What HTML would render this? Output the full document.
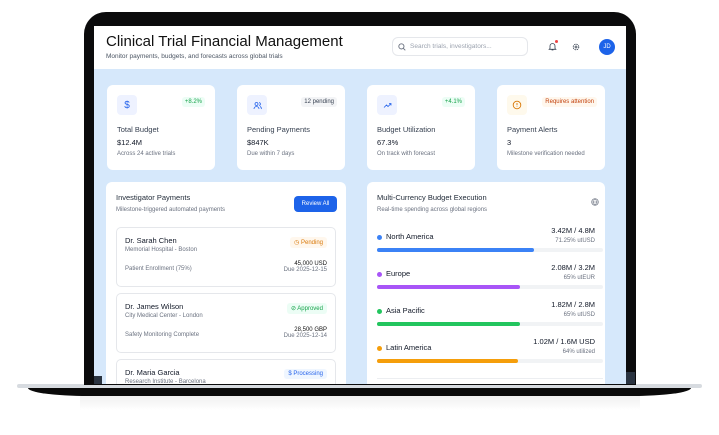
<!DOCTYPE html><html><head><style>
*{box-sizing:border-box;margin:0;padding:0}
body{width:719px;height:435px;background:#fff;position:relative;overflow:hidden;font-family:"Liberation Sans",sans-serif;color:#111827}
.bezel{position:absolute;left:84px;top:12px;width:552px;height:373px;background:#0b0b0c;border-radius:22px 22px 0 0}
.screen{position:absolute;left:94px;top:26px;width:532px;height:358px;background:#d6e8fb;overflow:hidden}
.hdr{position:absolute;left:0;top:0;width:532px;height:43px;background:#fff}
.abs{position:absolute}
.card{position:absolute;background:#fff;border-radius:6px}
.t1{font-size:7.5px;color:#374151}
.t2{font-size:7.5px;color:#111827}
.t3{font-size:6px;color:#6b7280}
.ic{position:absolute;left:10px;top:10px;width:20px;height:20px;border-radius:4px;background:#eef2ff;display:flex;align-items:center;justify-content:center}
.badge{position:absolute;top:12px;font-size:6px;padding:2px 3px;border-radius:3px}
.item{position:absolute;left:10px;width:220px;height:60px;border:1px solid #e5e7eb;border-radius:5px;background:#fff}
.bar{position:absolute;left:10px;width:226px;height:4px;background:#f1f3f5;border-radius:2px}
.bar i{display:block;height:4px;border-radius:2px}
.dot{display:inline-block;width:5px;height:5px;border-radius:50%;margin-right:4px;vertical-align:middle}
</style></head><body>
<div class="abs" style="left:17px;top:384px;width:685px;height:4px;background:#d7dbe0;border-radius:2px"></div>
<div class="abs" style="left:28px;top:388px;width:663px;height:8px;background:#0a0a0a;border-radius:0 0 60px 60px/0 0 8px 8px"></div>
<div class="abs" style="left:80px;top:396px;width:560px;height:14px;background:linear-gradient(#f0f0f0,#fff)"></div>
<div class="bezel"></div>
<div class="screen">
 <div class="hdr">
  <div class="abs" style="left:12px;top:7px;font-size:15px;color:#111">Clinical Trial Financial Management</div>
  <div class="abs" style="left:12px;top:27px;font-size:6.5px;color:#4b5563">Monitor payments, budgets, and forecasts across global trials</div>
  <div class="abs" style="left:298px;top:11px;width:136px;height:19px;border:1px solid #e5e7eb;border-radius:6px;font-size:6.5px;color:#9ca3af;padding:5px 0 0 17px">Search trials, investigators...
   <svg class="abs" style="left:5px;top:5px" width="8" height="8" viewBox="0 0 8 8"><circle cx="3.4" cy="3.4" r="2.6" fill="none" stroke="#6b7280" stroke-width=".9"/><path d="M5.3 5.3L7.3 7.3" stroke="#6b7280" stroke-width=".9"/></svg></div>
  <svg class="abs" style="left:454px;top:16px" width="9" height="9" viewBox="0 0 9 9"><path d="M2 6.5V4a2.5 2.5 0 015 0v2.5l.8.8H1.2zM3.6 8h1.8" fill="none" stroke="#374151" stroke-width=".8"/></svg>
  <div class="abs" style="left:461px;top:14px;width:3px;height:3px;border-radius:50%;background:#ef4444"></div>
  <svg class="abs" style="left:478px;top:17px" width="8" height="8" viewBox="0 0 8 8"><circle cx="4" cy="4" r="2.8" fill="none" stroke="#374151" stroke-width=".9" stroke-dasharray="1.4 .8"/><circle cx="4" cy="4" r="1" fill="none" stroke="#374151" stroke-width=".7"/></svg>
  <div class="abs" style="left:505px;top:13px;width:16px;height:16px;border-radius:50%;background:#1d63e9;color:#fff;font-size:6px;text-align:center;line-height:16px">JD</div>
 </div>
 <div class="card" style="left:13px;top:59px;width:108px;height:85px">
  <div class="ic"><span style="color:#2563eb;font-size:10px">$</span></div>
  <div class="badge" style="right:10px;background:#ecfdf5;color:#16a34a">+8.2%</div>
  <div class="abs t1" style="left:10px;top:40px">Total Budget</div>
  <div class="abs t2" style="left:10px;top:53px">$12.4M</div>
  <div class="abs t3" style="left:10px;top:66px">Across 24 active trials</div></div>
 <div class="card" style="left:143px;top:59px;width:108px;height:85px">
  <div class="ic"><svg width="9" height="9" viewBox="0 0 9 9"><circle cx="3.5" cy="3" r="1.5" fill="none" stroke="#2563eb" stroke-width=".8"/><path d="M1 8a2.5 2.5 0 015 0M6 1.6a1.4 1.4 0 010 2.8M7 5.5A2.3 2.3 0 018.3 8" fill="none" stroke="#2563eb" stroke-width=".8"/></svg></div>
  <div class="badge" style="right:8px;background:#f3f4f6;color:#374151">12 pending</div>
  <div class="abs t1" style="left:10px;top:40px">Pending Payments</div>
  <div class="abs t2" style="left:10px;top:53px">$847K</div>
  <div class="abs t3" style="left:10px;top:66px">Due within 7 days</div></div>
 <div class="card" style="left:273px;top:59px;width:108px;height:85px">
  <div class="ic"><svg width="9" height="9" viewBox="0 0 9 9"><path d="M1 6.5l2.5-2.5 1.5 1.5L8 2.5M6 2.5h2v2" fill="none" stroke="#2563eb" stroke-width=".8"/></svg></div>
  <div class="badge" style="right:10px;background:#ecfdf5;color:#16a34a">+4.1%</div>
  <div class="abs t1" style="left:10px;top:40px">Budget Utilization</div>
  <div class="abs t2" style="left:10px;top:53px">67.3%</div>
  <div class="abs t3" style="left:10px;top:66px">On track with forecast</div></div>
 <div class="card" style="left:403px;top:59px;width:108px;height:85px">
  <div class="ic" style="background:#fef9ec"><svg width="10" height="10" viewBox="0 0 10 10"><circle cx="5" cy="5" r="3.8" fill="none" stroke="#d97706" stroke-width=".9"/><path d="M5 3v2.3M5 6.5v.5" stroke="#d97706" stroke-width=".9"/></svg></div>
  <div class="badge" style="right:8px;background:#fff7ed;color:#c2410c">Requires attention</div>
  <div class="abs t1" style="left:10px;top:40px">Payment Alerts</div>
  <div class="abs t2" style="left:10px;top:53px">3</div>
  <div class="abs t3" style="left:10px;top:66px">Milestone verification needed</div></div>
 <div class="card" style="left:12px;top:156px;width:240px;height:220px">
  <div class="abs" style="left:10px;top:11px;font-size:7.5px;color:#1f2937">Investigator Payments</div>
  <div class="abs t3" style="left:10px;top:25px">Milestone-triggered automated payments</div>
  <div class="abs" style="left:188px;top:14px;width:43px;height:16px;background:#1d63e9;border-radius:4px;color:#fff;font-size:6px;text-align:center;line-height:16px">Review All</div>
  <div class="item" style="top:45px">
   <div class="abs t2" style="left:8px;top:8px">Dr. Sarah Chen</div>
   <div class="abs t3" style="left:8px;top:19px">Memorial Hospital - Boston</div>
   <div class="abs" style="right:8px;top:9px;font-size:6px;color:#d97706;background:#fff7ed;padding:2px 4px;border-radius:3px">◷ Pending</div>
   <div class="abs t3" style="left:8px;top:38px">Patient Enrollment (75%)</div>
   <div class="abs" style="right:8px;top:33px;font-size:6px;color:#111;text-align:right">45,000 USD<br><span style="color:#6b7280">Due 2025-12-15</span></div></div>
  <div class="item" style="top:111px">
   <div class="abs t2" style="left:8px;top:8px">Dr. James Wilson</div>
   <div class="abs t3" style="left:8px;top:19px">City Medical Center - London</div>
   <div class="abs" style="right:8px;top:9px;font-size:6px;color:#16a34a;background:#ecfdf5;padding:2px 4px;border-radius:3px">⊘ Approved</div>
   <div class="abs t3" style="left:8px;top:38px">Safety Monitoring Complete</div>
   <div class="abs" style="right:8px;top:33px;font-size:6px;color:#111;text-align:right">28,500 GBP<br><span style="color:#6b7280">Due 2025-12-14</span></div></div>
  <div class="item" style="top:177px">
   <div class="abs t2" style="left:8px;top:8px">Dr. Maria Garcia</div>
   <div class="abs t3" style="left:8px;top:19px">Research Institute - Barcelona</div>
   <div class="abs" style="right:8px;top:9px;font-size:6px;color:#2563eb;background:#eff6ff;padding:2px 4px;border-radius:3px">$ Processing</div></div>
 </div>
 <div class="card" style="left:273px;top:156px;width:238px;height:220px">
  <div class="abs" style="left:10px;top:11px;font-size:7.5px;color:#1f2937">Multi-Currency Budget Execution</div>
  <div class="abs t3" style="left:10px;top:25px">Real-time spending across global regions</div>
  <svg class="abs" style="left:224px;top:16px" width="8" height="8" viewBox="0 0 8 8"><circle cx="4" cy="4" r="3.3" fill="none" stroke="#6b7280" stroke-width=".7"/><path d="M.7 4h6.6M4 .7c-2 2-2 4.6 0 6.6M4 .7c2 2 2 4.6 0 6.6" fill="none" stroke="#6b7280" stroke-width=".6"/></svg>
  <div class="abs t2" style="left:10px;top:50px"><span class="dot" style="background:#3b82f6"></span>North America</div>
  <div class="abs" style="right:10px;top:44px;font-size:7.5px;text-align:right">3.42M / 4.8M<br><span style="font-size:6px;color:#6b7280">71.25% utUSD</span></div>
  <div class="bar" style="top:66px"><i style="width:157px;background:#3b82f6"></i></div>
  <div class="abs t2" style="left:10px;top:87px"><span class="dot" style="background:#a855f7"></span>Europe</div>
  <div class="abs" style="right:10px;top:81px;font-size:7.5px;text-align:right">2.08M / 3.2M<br><span style="font-size:6px;color:#6b7280">65% utEUR</span></div>
  <div class="bar" style="top:103px"><i style="width:143px;background:#a855f7"></i></div>
  <div class="abs t2" style="left:10px;top:124px"><span class="dot" style="background:#22c55e"></span>Asia Pacific</div>
  <div class="abs" style="right:10px;top:118px;font-size:7.5px;text-align:right">1.82M / 2.8M<br><span style="font-size:6px;color:#6b7280">65% utUSD</span></div>
  <div class="bar" style="top:140px"><i style="width:143px;background:#22c55e"></i></div>
  <div class="abs t2" style="left:10px;top:161px"><span class="dot" style="background:#f59e0b"></span>Latin America</div>
  <div class="abs" style="right:10px;top:155px;font-size:7.5px;text-align:right">1.02M / 1.6M USD<br><span style="font-size:6px;color:#6b7280">64% utilized</span></div>
  <div class="bar" style="top:177px"><i style="width:141px;background:#f59e0b"></i></div>
  <div class="abs" style="left:10px;top:196px;width:226px;height:1px;background:#eceef1"></div>
 </div>
</div>
<div class="abs" style="left:94px;top:376px;width:8px;height:8px;background:#2a3340"></div>
<div class="abs" style="left:626px;top:372px;width:9px;height:12px;background:#2a3340"></div>
</body></html>
